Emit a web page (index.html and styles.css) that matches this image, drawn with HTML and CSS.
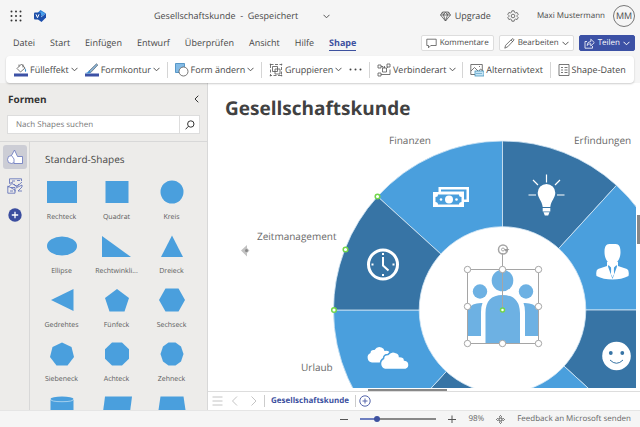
FILE: index.html
```html
<!DOCTYPE html>
<html lang="de">
<head>
<meta charset="utf-8">
<title>Gesellschaftskunde</title>
<link rel="stylesheet" href="styles.css">
</head>
<body>
<svg class="defs" aria-hidden="true">
  <symbol id="chev" viewBox="0 0 7 5"><path d="M.5 .8 3.5 3.8 6.5 .8"/></symbol>
</svg>
<div class="app">
  <header class="titlebar">
    <button class="plain" aria-label="Apps"><svg class="waffle" width="12" height="12" viewBox="0 0 12 12"><circle cx="1.500" cy="1.500" r="1"/><circle cx="6" cy="1.500" r="1"/><circle cx="10.500" cy="1.500" r="1"/><circle cx="1.500" cy="6" r="1"/><circle cx="6" cy="6" r="1"/><circle cx="10.500" cy="6" r="1"/><circle cx="1.500" cy="10.500" r="1"/><circle cx="6" cy="10.500" r="1"/><circle cx="10.500" cy="10.500" r="1"/></svg></button>
    <svg class="visio" width="12" height="12" viewBox="0 0 12 12"><path fill="#2b7cd3" d="M6.500 0 12 3.500 6.500 7 3 3.500z"/><path fill="#1c4fae" d="M12 3.500v4L7.500 12 4 9.500z"/><path fill="#4aa0ec" d="M7 1.500 11 3.500 8 5.500 5 3.500z"/><rect y="2.500" width="7" height="7" rx="1" fill="#1d4fa8"/><path fill="none" stroke="#fff" d="M2 4.300 3.500 7.700 5 4.300"/></svg>
    <div class="doc"><span>Gesellschaftskunde&nbsp; - &nbsp;Gespeichert</span><button class="plain" aria-label="Dateimenü"><svg class="chev" width="7" height="5"><use href="#chev"/></svg></button></div>
    <button class="plain upgrade"><svg class="ico" width="11" height="11" viewBox="0 0 11 11"><path d="M2.500 1h6L10.500 4 5.500 10 .5 4zM.5 4h10M3.500 4l2 6 2-6M2.500 1l1 3 2-3 2 3 1-3"/></svg>Upgrade</button>
    <button class="plain gear" aria-label="Einstellungen"><svg class="ico" width="12" height="12" viewBox="0 0 12 12"><path d="M4.900 .8h2.200l.4 1.500 1.100.6 1.500-.4 1.100 1.900L10.100 5.500v1l1.100 1.100-1.100 1.900-1.500-.4-1.100.6-.4 1.500H4.900l-.4-1.500-1.100-.6-1.500.4L.8 7.600 1.900 6.500v-1L.8 4.400l1.100-1.900 1.500.4 1.100-.6z"/><circle cx="6" cy="6" r="1.800"/></svg></button>
    <span class="user">Maxi Mustermann</span><span class="avatar">MM</span>
  </header>

  <nav class="tabs">
    <a href="#">Datei</a><a href="#">Start</a><a href="#">Einfügen</a><a href="#">Entwurf</a><a href="#">Überprüfen</a><a href="#">Ansicht</a><a href="#">Hilfe</a><a href="#" class="active">Shape</a>
    <div class="actions">
      <button class="action"><svg class="ico" width="11" height="11" viewBox="0 0 11 11"><path d="M.8 1.200h9.400v6.300H4.800L2.500 9.800V7.500H.8z"/></svg>Kommentare</button>
      <button class="action"><svg class="ico" width="11" height="11" viewBox="0 0 11 11"><path d="M.8 10.200 1.600 7.300 8 .9q1.300-.6 2.100 1L3.800 8.700zM7 2l2 2"/></svg>Bearbeiten<svg class="chev" width="7" height="5"><use href="#chev"/></svg></button>
      <button class="action primary"><svg class="ico" width="11" height="11" viewBox="0 0 11 11"><path d="M3 3.500H1v6.700h7.500V8M3 7.500Q3.300 3.500 6.800 3.500V1.200L10.300 4.600 6.800 8V5.700Q4.300 5.700 3 7.500z"/></svg>Teilen<svg class="chev" width="7" height="5"><use href="#chev"/></svg></button>
    </div>
  </nav>

  <div class="ribbon">
    <button class="tool"><svg width="14" height="14" viewBox="0 0 14 14"><rect y="10.500" width="14" height="3" fill="#3c51a5"/><path class="l" d="M3 5.500 7.500 1 11 5 6.500 9zM5 3.500V1.500M9 1.500v3"/><path fill="#3d8fd1" d="M11 5q2 2.500 1 4-1.500 0-1-4z"/></svg>Fülleffekt<svg class="chev" width="7" height="5"><use href="#chev"/></svg></button>
    <button class="tool"><svg width="14" height="14" viewBox="0 0 14 14"><rect y="10.500" width="14" height="3" fill="#3c51a5"/><path fill="#8bb4d8" stroke="#52606b" stroke-width=".7" d="M4 8 11.500.8l1.300 1.200L5.800 9.500z"/><path fill="#3d8fd1" d="M0 10q2.500 0 4-2.500l2 2Q4 11 0 10z"/></svg>Formkontur<svg class="chev" width="7" height="5"><use href="#chev"/></svg></button>
    <i class="sep"></i>
    <button class="tool"><svg width="14" height="14" viewBox="0 0 14 14"><path fill="#83bbe6" stroke="#3d86bd" stroke-width=".8" d="M.5.5h9v3L4 9.500H.5z"/><circle cx="8.500" cy="8.500" r="4.500" fill="#fff" stroke="#555" stroke-width=".8"/></svg>Form ändern<svg class="chev" width="7" height="5"><use href="#chev"/></svg></button>
    <i class="sep"></i>
    <button class="tool"><svg width="14" height="14" viewBox="0 0 14 14"><path class="l" d="M3.500 3.500h5v5h-5zM6 6h5v5H6z"/><path class="l" stroke-dasharray="3 1.500" d="M1.500 1.500h11v11h-11z"/><path fill="#666" d="M.8.8H2v1.200H.8zM12 .8h1.200V2H12zM.8 12H2v1.200H.8zM12 12h1.200v1.200H12z"/></svg>Gruppieren<svg class="chev" width="7" height="5"><use href="#chev"/></svg></button>
    <button class="tool" aria-label="Mehr"><svg width="13" height="3" viewBox="0 0 13 3"><g fill="#444"><circle cx="1.500" cy="1.500" r="1"/><circle cx="6.500" cy="1.500" r="1"/><circle cx="11.500" cy="1.500" r="1"/></g></svg></button>
    <i class="sep"></i>
    <button class="tool"><svg width="14" height="14" viewBox="0 0 14 14"><path class="l" d="M1 2h3v3H1zM10 1h3v3h-3zM1 10h3v3H1zM5.500 5h4v4h-4zM4 3.500h2V5M9.500 5 11 4M4 11.500h9V6.500M7.500 5V3"/></svg>Verbinderart<svg class="chev" width="7" height="5"><use href="#chev"/></svg></button>
    <i class="sep"></i>
    <button class="tool"><svg width="14" height="14" viewBox="0 0 14 14"><path class="l" d="M.8 1.500h11.500v10H.8zM1 8l3.500-3.500 4 4L10.500 6l1.800 1.500M9 3.500h1"/><rect x="5" y="8" width="9" height="5" fill="#c5e4f5" stroke="#3589b5" stroke-width=".7"/><path stroke="#3589b5" stroke-dasharray="1 1" d="M6.500 10.500h6"/></svg>Alternativtext</button>
    <i class="sep"></i>
    <button class="tool"><svg width="12" height="14" viewBox="0 0 12 14"><path class="l" d="M1 1.500h10v11H1zM3 4.500h2M6.500 4.500h3M3 7h2M6.500 7h3M3 9.500h2M6.500 9.500h3"/></svg>Shape-Daten</button>
  </div>

  <div class="body">
    <aside class="side">
      <div class="side-head"><h2>Formen</h2><button class="plain" aria-label="Einklappen"><svg class="collapse" width="5" height="8" viewBox="0 0 5 8"><path d="M4.300.7 1 4l3.300 3.300"/></svg></button></div>
      <form class="search"><input aria-label="Nach Shapes suchen" placeholder="Nach Shapes suchen"><button type="button" aria-label="Suchen"><svg width="10" height="10" viewBox="0 0 10 10"><circle cx="5.800" cy="4" r="3.200"/><path d="M3.400 6.300.6 9.300"/></svg></button></form>
      <div class="side-main">
        <div class="rail">
          <button class="on" aria-label="Formen"><svg width="16" height="16" viewBox="0 0 16 16"><circle cx="4.500" cy="10.500" r="4" fill="#fff" stroke="#6574bd" stroke-width=".8"/><path fill="#fff" stroke="#6574bd" stroke-width=".8" d="M7.500 1 10.500 7.500h5v7H7V10L4.500 6.500z"/></svg></button>
          <button aria-label="Diagramme"><svg width="16" height="16" viewBox="0 0 16 16" fill="none" stroke="#5969b5" stroke-width=".8"><path d="M2.500 2V.8h12V3M2.500 2v3.500L6 4M.8 9.500 5 5.500l5 3 5-4.500M.8 8v7.200H8V12L.8 8M4 9.500h4v4M3 13h3M9 10l6-3v2l-4 4h4M7 6q2 4 5 0M5 3h3M10 2.500h3"/></svg></button>
          <button aria-label="Hinzufügen"><svg width="14" height="14" viewBox="0 0 14 14"><circle cx="7" cy="7" r="6.700" fill="#3b4d9f"/><path stroke="#fff" stroke-width="1.300" d="M3.800 7h6.400M7 3.800v6.400"/></svg></button>
        </div>
        <section class="shapes">
          <h3>Standard-Shapes</h3>
          <ul class="grid">
            <li><svg viewBox="0 0 30 24"><path d="M0 1h30v22H0z"/></svg>Rechteck</li>
            <li><svg viewBox="0 0 30 24"><path d="M3.500 1h23v22h-23z"/></svg>Quadrat</li>
            <li><svg viewBox="0 0 30 24"><circle cx="15" cy="12" r="11.500"/></svg>Kreis</li>
            <li><svg viewBox="0 0 30 24"><ellipse cx="15" cy="12" rx="15" ry="9.500"/></svg>Ellipse</li>
            <li><svg viewBox="0 0 30 24"><path d="M0 2 29 23H0z"/></svg>Rechtwinkli...</li>
            <li><svg viewBox="0 0 30 24"><path d="M15 1.500 26 23H4z"/></svg>Dreieck</li>
            <li><svg viewBox="0 0 30 24"><path d="M4 12 26.500 1v22z"/></svg>Gedrehtes</li>
            <li><svg viewBox="0 0 30 24"><path d="M15 1 27 10 22.500 23.500h-15L3 10z"/></svg>Fünfeck</li>
            <li><svg viewBox="0 0 30 24"><path d="M8.500.5h13L28 12 21.500 23.500h-13L2 12z"/></svg>Sechseck</li>
            <li><svg viewBox="0 0 30 24"><path d="M15 .5 24.500 5 27 15 20.500 23.500h-11L3 15 5.500 5z"/></svg>Siebeneck</li>
            <li><svg viewBox="0 0 30 24"><path d="M10 .5h10l7 6.800v9.400l-7 6.800H10l-7-6.800V7.300z"/></svg>Achteck</li>
            <li><svg viewBox="0 0 30 24"><path d="M11.500.5h7L24 4.500 26.500 12 24 19.500l-5.500 4h-7L6 19.500 3.500 12 6 4.500z"/></svg>Zehneck</li>
            <li><svg viewBox="0 0 30 24"><path d="M3.500 4V24h23V4z"/><ellipse cx="15" cy="3" rx="11.500" ry="2.500"/><path d="M3.500 3.200q0 2.500 11.500 2.500t11.500-2.500" fill="none" stroke="#b9daf1" stroke-width=".8"/></svg></li>
            <li><svg viewBox="0 0 30 24"><path d="M3 .5h27L27 24H0z"/></svg></li>
            <li><svg viewBox="0 0 30 24"><path d="M3.500 .5h23L30 24H0z"/></svg></li>
          </ul>
        </section>
      </div>
    </aside>

    <main class="work">
      <div class="view">
        <svg class="canvas" role="img" aria-label="Zeichenfläche">
          <g transform="translate(-208 -83)">
            <text class="heading" x="225" y="115">Gesellschaftskunde</text>
            <g class="labels"><text x="389" y="144">Finanzen</text><text x="574" y="144">Erfindungen</text><text x="257" y="240">Zeitmanagement</text><text x="301" y="371">Urlaub</text></g>
            <g transform="translate(502.500 310)" stroke="#d4e7f5" stroke-width=".8">
              <path class="b1" d="M0 0-125-113.500A169 169 0 0 1 0-169z"/>
              <path class="b2" d="M0 0V-169A169 169 0 0 1 114-124.700z"/>
              <path class="b1" d="M0 0 114-124.700A169 169 0 0 1 169 0z"/>
              <path class="b2" d="M0 0H169A169 169 0 0 1 125 114z"/>
              <path class="b1" d="M0 0 125 114A169 169 0 0 1 0 169z"/>
              <path class="b2" d="M0 0V169A169 169 0 0 1-114 124.700z"/>
              <path class="b1" d="M0 0-114 124.700A169 169 0 0 1-169 0z"/>
              <path class="b2" d="M0 0H-169A169 169 0 0 1-125-113.500z"/>
              <circle r="83.300" fill="#fff"/>
            </g>
            <g fill="#fff">
              <path d="M438.500 187h30.500v15h-5v-10h-25.500z"/>
              <path class="f1" d="M441 189.500h25.500v10h-2.500v-8h-23z"/>
              <path d="M433 192h31v15h-31z"/>
              <path class="f1" d="M438 194.500h21q0 2.500 2.500 2.500v5q-2.500 0-2.500 2.500h-21q0-2.500-2.500-2.500v-5q2.500 0 2.500-2.500z"/>
              <circle cx="449" cy="199.500" r="4"/><circle cx="441" cy="199.500" r="1.300"/><circle cx="456.500" cy="199.500" r="1.300"/>
              <path d="M546.500 184a8.800 8.800 0 0 1 8.800 8.800c0 5-4.300 8-5 14.200h-7.600c-.7-6.200-5-9.200-5-14.200a8.800 8.800 0 0 1 8.800-8.800zM542.700 208h7.600v3.500h-7.600zM543.500 212.300h6l-1.300 3.200h-3.400z"/>
              <path stroke="#fff" stroke-width="1.200" d="M546.500 174.500v8M533 180l5 5M560 180l-5 5M528.500 195h7.500M557 195h7.500"/>
              <path d="M604.500 252c0-9 4-8 8-8s8-1 8 8c0 7-3.500 12-8 12s-8-5-8-12zM607 262h11v4l9 3q2.500 1.500 1.500 7-7 3.500-16 3.500t-16-3.500q-1-5.500 1.500-7l9-3z"/>
              <path class="f1" d="M608.500 265 611 267.500l1.500 10.500 1.500-10.500 2.500-2.500.5 1.500-4.500 12.500-4.500-12.500z"/><path d="m611.500 268 1-1 1 1 .7 6-1.700 3-1.700-3z"/>
              <circle cx="616.500" cy="356" r="14.300"/>
              <g fill="#3774a5"><circle cx="610.800" cy="353" r="1.900"/><circle cx="622.300" cy="353" r="1.900"/></g>
              <path fill="none" stroke="#3774a5" d="M610 360q6.500 6.500 13 0"/>
              <path d="M372 362.500a5 5 0 0 1-1.500-9.500q0-3.500 4-3 3-4.500 7-2.500 2.500.5 3 3.500 5-1 5.500 3l-6 8.500z"/>
              <path stroke="#4a9fdd" stroke-width="1.500" d="M385 369.500a6 6 0 0 1-1.500-11q0-4 4.500-4 3.500-4.500 8-2 3.500 1 3.500 4 5 0 5 3.500 5 1 4.500 5.500-.5 4-5.500 4z"/>
            </g>
            <g fill="none" stroke="#fff" transform="translate(383 264.500)"><circle r="14.500" stroke-width="3"/><path stroke-width="2" d="M0-7.500V1L5.500 6M0-11.500v2M0 9.500v2M-11.500 0h2M9.500 0h2"/></g>
            <g fill="#6db1e3"><circle cx="502.500" cy="280.500" r="10.800"/><circle cx="480" cy="291.500" r="7.200"/><circle cx="526" cy="291.500" r="7.200"/><path d="M485.500 343.500V313q0-18 17-18t17.500 18v30.500zM468 336V309q4-6.500 14.500-6-1.500 3.500-1.500 9v24zM538 336V309q-4-6.500-14.500-6 1.500 3.500 1.500 9v24z"/></g>
            <g fill="none" stroke="#a5a5a5"><path d="M467.500 269.500h71v74h-71zM502.500 253v54"/><g fill="#fff"><circle cx="467.500" cy="269.500" r="3.200"/><circle cx="502.500" cy="269.500" r="3.200"/><circle cx="538.500" cy="269.500" r="3.200"/><circle cx="467.500" cy="306.500" r="3.200"/><circle cx="538.500" cy="306.500" r="3.200"/><circle cx="467.500" cy="343.500" r="3.200"/><circle cx="502.500" cy="343.500" r="3.200"/><circle cx="538.500" cy="343.500" r="3.200"/></g><circle cx="503" cy="249.500" r="4.500" stroke-width="1.500"/><path fill="#999" stroke="none" d="m509.500 249-3.500 3-2-3z"/><circle cx="503" cy="249.500" r="1.500"/></g>
            <g fill="#fff" stroke="#72d64b" stroke-width="1.500"><circle cx="377.500" cy="196.500" r="2.300"/><circle cx="345.500" cy="249.500" r="2.300"/><circle cx="334" cy="310" r="2.300"/><circle cx="502.500" cy="310" r="2"/></g>
            <path fill="#c2c2c2" d="m241 250.500 6-5.500v3l2.500 2.500L247 253v3.500z"/><circle cx="246.500" cy="250.500" r="1.500" fill="#888"/>
          </g>
        </svg>
        <div class="vscroll"><i></i></div>
      </div>
      <div class="hscroll"><i></i></div>
      <div class="sheets">
        <svg width="52" height="12" viewBox="0 0 52 12"><path d="M.5 2h10M.5 6h10M.5 10h10M25 1.500 20.500 6l4.500 4.500M39.500 1.500 44 6l-4.500 4.500"/></svg>
        <a href="#">Gesellschaftskunde</a>
        <button class="plain" aria-label="Neue Seite"><svg width="12" height="12" viewBox="0 0 12 12"><circle cx="6" cy="6" r="5.200"/><path d="M3.500 6h5M6 3.500v5"/></svg></button>
      </div>
    </main>
  </div>

  <footer class="status">
    <button class="plain" aria-label="Verkleinern"><svg width="8" height="8" viewBox="0 0 8 8"><path d="M0 4.500h8"/></svg></button>
    <input type="range" aria-label="Zoom" min="0" max="100" value="19">
    <button class="plain" aria-label="Vergrößern"><svg width="8" height="8" viewBox="0 0 8 8"><path d="M0 4.500h8M4 .5v8"/></svg></button>
    <span>98%</span>
    <button class="plain" aria-label="Einpassen"><svg width="9" height="9" viewBox="0 0 9 9"><path d="M3 3h3v3H3zM3.300 1.700 4.500.5l1.200 1.200M3.300 7.300l1.200 1.200 1.200-1.200M1.700 3.300.5 4.500l1.200 1.200M7.300 3.300l1.200 1.200-1.200 1.200"/></svg></button>
    <a href="#">Feedback an Microsoft senden</a>
  </footer>
</div>
</body>
</html>
```
FILE: styles.css
```css
* { box-sizing: border-box; margin: 0; padding: 0; }
body { font: 9px/12px "Open Sans", "Noto Sans", sans-serif; color: #484848; background: #f5f5f5; text-rendering: geometricPrecision; }
button, input { font: inherit; color: inherit; text-rendering: inherit; }
button { white-space: nowrap; display: flex; align-items: center; }
a { color: inherit; text-decoration: none; }
svg { display: block; flex: none; }
.defs { position: absolute; width: 0; height: 0; }
.app { height: 100vh; display: flex; flex-direction: column; overflow: hidden; }
.plain { border: 0; background: none; gap: 4px; }
.chev { fill: none; stroke: #555; }
.ico, .l { fill: none; stroke: #555; stroke-width: .8; }

.titlebar { height: 32px; flex: none; display: flex; align-items: center; padding: 0 5px 0 10px; }
.waffle { fill: #333; }
.visio { margin-left: 12px; }
.doc { display: flex; align-items: center; gap: 25px; margin-left: 108px; }
.upgrade { margin-left: auto; }
.gear { margin: 0 18px 0 16px; }
.user { margin-right: 8px; font-size: 8px; }
.avatar { width: 22px; height: 22px; border: 1px solid #777; border-radius: 50%; display: grid; place-items: center; }

.tabs { height: 24px; flex: none; display: flex; align-items: center; gap: 15px; padding: 0 5px 2px 13px; }
.tabs > a { padding: 2px 0 1px; border-bottom: 1px solid transparent; }
.tabs > .active { color: #3d519f; font-weight: 700; border-color: #3d519f; }
.actions { margin-left: auto; display: flex; gap: 5px; }
.action { height: 16px; padding: 0 4px; gap: 3px; border: 1px solid #ddd; border-radius: 2px; background: #fff; font-size: 8px; }
.primary { background: #3c51a5; border-color: #3c51a5; color: #fff; }
.primary svg { stroke: #fff; }

.ribbon { height: 27px; flex: none; margin: 0 6px; padding: 0 8px; background: #fff; border-radius: 4px; box-shadow: 0 1px 2px #0003; display: flex; align-items: center; justify-content: space-between; position: relative; }
.tool { border: 0; background: none; gap: 2px; }
.sep { width: 1px; height: 16px; background: #d5d5d5; }

.body { flex: 1; min-height: 0; display: flex; }
.side { width: 208px; flex: none; background: #edecea; border-right: 1px solid #d8d8d8; display: flex; flex-direction: column; }
.side-head { display: flex; justify-content: space-between; align-items: center; padding: 10px 8px; }
h2 { font-size: 10px; line-height: 12px; color: #333; }
.collapse, .search svg { fill: none; stroke: #333; }
.search { height: 19px; margin: 0 7px 7px; display: flex; flex: none; background: #fff; border: 1px solid #ddd; }
.search input { flex: 1; min-width: 0; border: 0; padding: 0 8px; outline: 0; background: none; font-size: 8px; }
.search input::placeholder { color: #777; opacity: 1; }
.search button { border: 0; border-left: 1px solid #ddd; background: none; width: 20px; justify-content: center; }
.side-main { flex: 1; min-height: 0; display: flex; border-top: 1px solid #d8d8d8; }
.rail { width: 30px; flex: none; border-right: 1px solid #d8d8d8; display: flex; flex-direction: column; align-items: center; gap: 5px; padding-top: 3px; }
.rail button { width: 24px; height: 24px; border: 0; border-radius: 3px; background: none; justify-content: center; }
.rail .on { background: #cccdd5; }
.shapes { flex: 1; overflow: hidden; padding: 10px 8px 0 4px; }
h3 { font-size: 10px; line-height: 14px; font-weight: 400; padding-left: 11px; }
.grid { list-style: none; display: grid; grid-template-columns: repeat(3, 1fr); grid-auto-rows: 54px; padding-top: 14px; }
.grid li { display: flex; flex-direction: column; align-items: center; gap: 9px; font-size: 7px; line-height: 10px; white-space: nowrap; color: #5c5c5c; }
.grid svg { width: 30px; height: 24px; fill: #4a9fdd; }

.work { flex: 1; min-width: 0; display: flex; flex-direction: column; background: #fff; }
.view { flex: 1; min-height: 0; display: flex; }
.canvas { flex: 1; min-width: 0; height: 100%; overflow: hidden; }
.heading { font-size: 19px; font-weight: 700; fill: #414141; }
.labels { font-size: 10px; fill: #696969; }
.b1, .f1 { fill: #4a9fdd; }
.b2 { fill: #3774a5; }
.f1 { stroke: none; }
.vscroll { width: 4px; padding: 132px 0 0 1px; }
.vscroll i { display: block; width: 3px; height: 29px; background: #888; }
.hscroll { height: 4px; padding: 1px 0 0 160px; border-bottom: 1px solid #ddd; }
.hscroll i { display: block; width: 79px; height: 2px; background: #888; }
.sheets { height: 18px; flex: none; display: flex; align-items: center; padding-left: 4px; }
.sheets svg { fill: none; stroke: #c4c4c4; }
.sheets a { font-size: 8px; font-weight: 700; color: #3d519f; border: solid #ccc; border-width: 0 1px; padding: 0 6px; margin-right: 3px; }
.sheets button svg { stroke: #5565aa; }

.status { height: 17px; flex: none; display: flex; align-items: center; justify-content: flex-end; gap: 12px; padding-right: 9px; font-size: 8px; border-top: 1px solid #e5e5e5; color: #666; }
.status svg { fill: none; stroke: #555; }
.status input { appearance: none; width: 76px; height: 8px; background: linear-gradient(90deg, #6e7fc0 20%, #888 20%) center / 100% 2px no-repeat; }
.status input::-webkit-slider-thumb { appearance: none; width: 6px; height: 6px; border-radius: 50%; background: #3d519f; }
```
